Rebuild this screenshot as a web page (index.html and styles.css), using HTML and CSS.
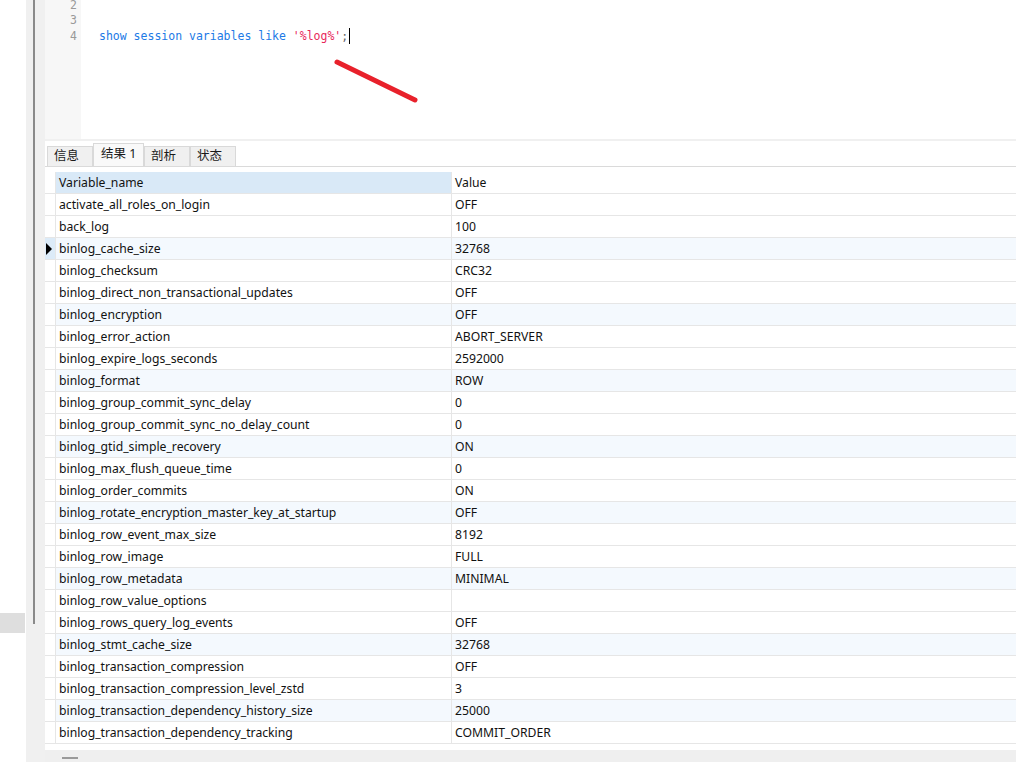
FILE: index.html
```html
<!DOCTYPE html>
<html>
<head>
<meta charset="utf-8">
<link rel="stylesheet" href="styles.css">
</head>
<body>
<div class="app">
  <div class="left"><div class="left-block"></div></div>
  <div class="splitter"><div class="splitter-line"></div></div>
  <div class="main">
    <div class="editor">
      <div class="gutter">
        <div class="ln">2</div><div class="ln">3</div><div class="ln">4</div>
      </div>
      <div class="code">
        <div class="line"></div>
        <div class="line"></div>
        <div class="line"><span class="kw">show session variables like</span> <span class="str">'%log%'</span><span class="punct">;</span><span class="caret"></span></div>
      </div>
      <svg class="arrow" width="100" height="60" viewBox="0 0 100 60"><line x1="5" y1="6" x2="83" y2="44" stroke="#e8212b" stroke-width="5" stroke-linecap="round"/></svg>
    </div>
    <div class="sep"></div>
    <div class="tabs">
      <div class="tab">信息</div>
      <div class="tab active">结果 1</div>
      <div class="tab">剖析</div>
      <div class="tab">状态</div>
    </div>
    <div class="grid-wrap">
      <div class="grid">
        <div class="row head"><div class="ind"></div><div class="c1">Variable_name</div><div class="c2">Value</div></div>
        <div class="row"><div class="ind"></div><div class="c1">activate_all_roles_on_login</div><div class="c2">OFF</div></div>
        <div class="row"><div class="ind"></div><div class="c1">back_log</div><div class="c2">100</div></div>
        <div class="row alt cur"><div class="ind"><span class="tri"></span></div><div class="c1">binlog_cache_size</div><div class="c2">32768</div></div>
        <div class="row"><div class="ind"></div><div class="c1">binlog_checksum</div><div class="c2">CRC32</div></div>
        <div class="row"><div class="ind"></div><div class="c1">binlog_direct_non_transactional_updates</div><div class="c2">OFF</div></div>
        <div class="row alt"><div class="ind"></div><div class="c1">binlog_encryption</div><div class="c2">OFF</div></div>
        <div class="row"><div class="ind"></div><div class="c1">binlog_error_action</div><div class="c2">ABORT_SERVER</div></div>
        <div class="row"><div class="ind"></div><div class="c1">binlog_expire_logs_seconds</div><div class="c2">2592000</div></div>
        <div class="row alt"><div class="ind"></div><div class="c1">binlog_format</div><div class="c2">ROW</div></div>
        <div class="row"><div class="ind"></div><div class="c1">binlog_group_commit_sync_delay</div><div class="c2">0</div></div>
        <div class="row"><div class="ind"></div><div class="c1">binlog_group_commit_sync_no_delay_count</div><div class="c2">0</div></div>
        <div class="row alt"><div class="ind"></div><div class="c1">binlog_gtid_simple_recovery</div><div class="c2">ON</div></div>
        <div class="row"><div class="ind"></div><div class="c1">binlog_max_flush_queue_time</div><div class="c2">0</div></div>
        <div class="row"><div class="ind"></div><div class="c1">binlog_order_commits</div><div class="c2">ON</div></div>
        <div class="row alt"><div class="ind"></div><div class="c1">binlog_rotate_encryption_master_key_at_startup</div><div class="c2">OFF</div></div>
        <div class="row"><div class="ind"></div><div class="c1">binlog_row_event_max_size</div><div class="c2">8192</div></div>
        <div class="row"><div class="ind"></div><div class="c1">binlog_row_image</div><div class="c2">FULL</div></div>
        <div class="row alt"><div class="ind"></div><div class="c1">binlog_row_metadata</div><div class="c2">MINIMAL</div></div>
        <div class="row"><div class="ind"></div><div class="c1">binlog_row_value_options</div><div class="c2"></div></div>
        <div class="row"><div class="ind"></div><div class="c1">binlog_rows_query_log_events</div><div class="c2">OFF</div></div>
        <div class="row alt"><div class="ind"></div><div class="c1">binlog_stmt_cache_size</div><div class="c2">32768</div></div>
        <div class="row"><div class="ind"></div><div class="c1">binlog_transaction_compression</div><div class="c2">OFF</div></div>
        <div class="row"><div class="ind"></div><div class="c1">binlog_transaction_compression_level_zstd</div><div class="c2">3</div></div>
        <div class="row alt"><div class="ind"></div><div class="c1">binlog_transaction_dependency_history_size</div><div class="c2">25000</div></div>
        <div class="row"><div class="ind"></div><div class="c1">binlog_transaction_dependency_tracking</div><div class="c2">COMMIT_ORDER</div></div>
      </div>
    </div>
    <div class="status"><div class="dash"></div></div>
  </div>
</div>
</body>
</html>
```
FILE: styles.css
```css
html, body {
  margin: 0;
  padding: 0;
  width: 1016px;
  height: 762px;
  overflow: hidden;
  background: #ffffff;
  font-family: "Noto Sans", "Noto Sans CJK SC", sans-serif;
}
.app {
  display: flex;
  height: 762px;
}
.left {
  width: 26px;
  flex: none;
  background: #ffffff;
}
.left-block {
  margin-top: 613px;
  width: 25px;
  height: 20px;
  background: #dedede;
}
.splitter {
  width: 19px;
  flex: none;
  background: #f0f0f0;
}
.splitter-line {
  margin-left: 7px;
  width: 2px;
  height: 624px;
  background: #8a8a8a;
}
.main {
  flex: 1;
  display: flex;
  flex-direction: column;
  min-width: 0;
}
.editor {
  height: 139px;
  flex: none;
  display: flex;
  position: relative;
  overflow: hidden;
}
.gutter {
  width: 36px;
  background: #f7f7f7;
}
.ln {
  height: 15.3px;
  line-height: 15.3px;
  text-align: right;
  padding-right: 4px;
  font-family: "DejaVu Sans Mono", monospace;
  font-size: 11.5px;
  color: #999999;
}
.ln:first-child {
  height: 13.3px;
  line-height: 11.3px;
}
.code {
  flex: 1;
  padding-left: 18px;
}
.line {
  height: 15.3px;
  line-height: 15.3px;
  font-family: "DejaVu Sans Mono", monospace;
  font-size: 11.5px;
  white-space: pre;
  display: flex;
  align-items: center;
}
.line:first-child {
  height: 13.3px;
}
.kw { color: #2179e6; white-space: pre; }
.str { color: #e8275a; margin-left: 6.9px; }
.punct { color: #666666; }
.caret {
  display: inline-block;
  width: 1px;
  height: 16px;
  background: #000000;
  margin-left: 1px;
}
.arrow {
  position: absolute;
  left: 287px;
  top: 56px;
}
.sep {
  height: 2px;
  flex: none;
  background: #f0f0f0;
}
.tabs {
  flex: none;
  display: flex;
  align-items: flex-end;
  padding-left: 2px;
  border-bottom: 1px solid #dadada;
  box-sizing: border-box;
  height: 26px;
}
.tab {
  width: 46px;
  height: 20px;
  box-sizing: border-box;
  background: #f0f0f0;
  border: 1px solid #d9d9d9;
  border-bottom: none;
  padding-left: 6px;
  font-size: 12.5px;
  line-height: 17px;
  color: #1a1a1a;
}
.tab.active {
  width: 51px;
  height: 23px;
  background: #f9f9f9;
  padding-left: 7px;
  line-height: 19px;
}
.grid-wrap {
  flex: 1;
  padding-top: 5px;
  background: #ffffff;
  overflow: hidden;
}
.grid {
  display: flex;
  flex-direction: column;
}
.row {
  display: grid;
  grid-template-columns: 11px 396px 1fr;
  height: 22px;
  box-sizing: border-box;
  border-bottom: 1px solid #e6e6e6;
  font-size: 12.2px;
  color: #111111;
  line-height: 21px;
}
.row > div {
  border-right: 1px solid #e6e6e6;
  white-space: nowrap;
  overflow: hidden;
}
.row .c1 { padding-left: 3px; }
.row .c2 { padding-left: 3px; border-right: none; }
.row.alt { background: #f4f9fe; }
.row.alt .ind { background: #ffffff; }
.row.cur .ind { background: #dcebf8; }
.head .c1 { background: #d9e9f7; }
.head .ind { background: #ffffff; }
.ind {
  display: flex;
  align-items: center;
  justify-content: center;
}
.tri {
  width: 0;
  height: 0;
  border-top: 6px solid transparent;
  border-bottom: 6px solid transparent;
  border-left: 6px solid #000000;
  margin-right: 2px;
}
.status {
  height: 12px;
  flex: none;
  background: #efefef;
}
.dash {
  margin-left: 17px;
  margin-top: 7px;
  width: 16px;
  height: 2px;
  background: #9a9a9a;
}
```
